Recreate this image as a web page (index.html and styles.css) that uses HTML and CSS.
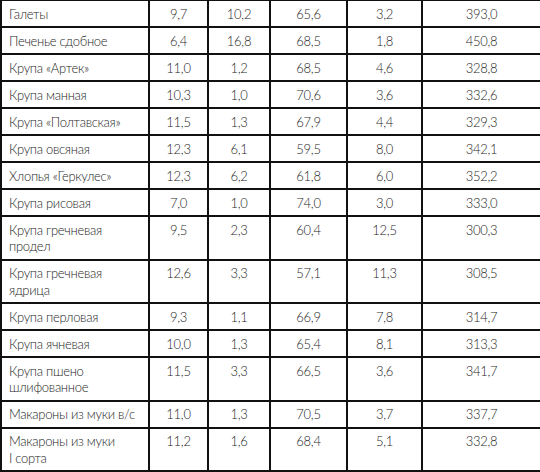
FILE: index.html
```html
<!DOCTYPE html>
<html lang="ru">
<head>
<meta charset="utf-8">
<title>Пищевая ценность</title>
<link rel="stylesheet" href="styles.css">
</head>
<body>
<table class="nutrition">
  <colgroup>
    <col class="c-name"><col class="c-p"><col class="c-f"><col class="c-c"><col class="c-x"><col class="c-k">
  </colgroup>
  <tbody>
    <tr><td class="name">Галеты</td><td>9,7</td><td>10,2</td><td>65,6</td><td>3,2</td><td>393,0</td></tr>
    <tr><td class="name">Печенье сдобное</td><td>6,4</td><td>16,8</td><td>68,5</td><td>1,8</td><td>450,8</td></tr>
    <tr><td class="name">Крупа «Артек»</td><td>11,0</td><td>1,2</td><td>68,5</td><td>4,6</td><td>328,8</td></tr>
    <tr><td class="name">Крупа манная</td><td>10,3</td><td>1,0</td><td>70,6</td><td>3,6</td><td>332,6</td></tr>
    <tr><td class="name">Крупа «Полтавская»</td><td>11,5</td><td>1,3</td><td>67,9</td><td>4,4</td><td>329,3</td></tr>
    <tr><td class="name">Крупа овсяная</td><td>12,3</td><td>6,1</td><td>59,5</td><td>8,0</td><td>342,1</td></tr>
    <tr><td class="name">Хлопья «Геркулес»</td><td>12,3</td><td>6,2</td><td>61,8</td><td>6,0</td><td>352,2</td></tr>
    <tr><td class="name">Крупа рисовая</td><td>7,0</td><td>1,0</td><td>74,0</td><td>3,0</td><td>333,0</td></tr>
    <tr><td class="name">Крупа гречневая<br>продел</td><td>9,5</td><td>2,3</td><td>60,4</td><td>12,5</td><td>300,3</td></tr>
    <tr><td class="name">Крупа гречневая<br>ядрица</td><td>12,6</td><td>3,3</td><td>57,1</td><td>11,3</td><td>308,5</td></tr>
    <tr><td class="name">Крупа перловая</td><td>9,3</td><td>1,1</td><td>66,9</td><td>7,8</td><td>314,7</td></tr>
    <tr><td class="name">Крупа ячневая</td><td>10,0</td><td>1,3</td><td>65,4</td><td>8,1</td><td>313,3</td></tr>
    <tr><td class="name">Крупа пшено<br>шлифованное</td><td>11,5</td><td>3,3</td><td>66,5</td><td>3,6</td><td>341,7</td></tr>
    <tr><td class="name">Макароны из муки в/с</td><td>11,0</td><td>1,3</td><td>70,5</td><td>3,7</td><td>337,7</td></tr>
    <tr><td class="name">Макароны из муки<br>I сорта</td><td>11,2</td><td>1,6</td><td>68,4</td><td>5,1</td><td>332,8</td></tr>
  </tbody>
</table>
</body>
</html>
```
FILE: styles.css
```css
html, body {
  margin: 0;
  padding: 0;
  background: #ffffff;
}

.nutrition {
  width: 540px;
  margin-top: -1px;
  border-collapse: collapse;
  table-layout: fixed;
  font-family: Lato, "Open Sans", "DejaVu Sans", sans-serif;
  font-size: 13px;
  font-weight: 300;
  letter-spacing: -0.3px;
  line-height: 16.5px;
  color: #1e1e1e;
}

.c-name { width: 148px; }
.c-p { width: 59px; }
.c-f { width: 62px; }
.c-c { width: 77px; }
.c-x { width: 75px; }
.c-k { width: 119px; }

.nutrition td {
  border: 2px solid #111111;
  padding: 4.5px 2px 4px;
  text-align: center;
  vertical-align: top;
  white-space: nowrap;
}

.nutrition td.name {
  text-align: left;
  padding-left: 7px;
}
```
